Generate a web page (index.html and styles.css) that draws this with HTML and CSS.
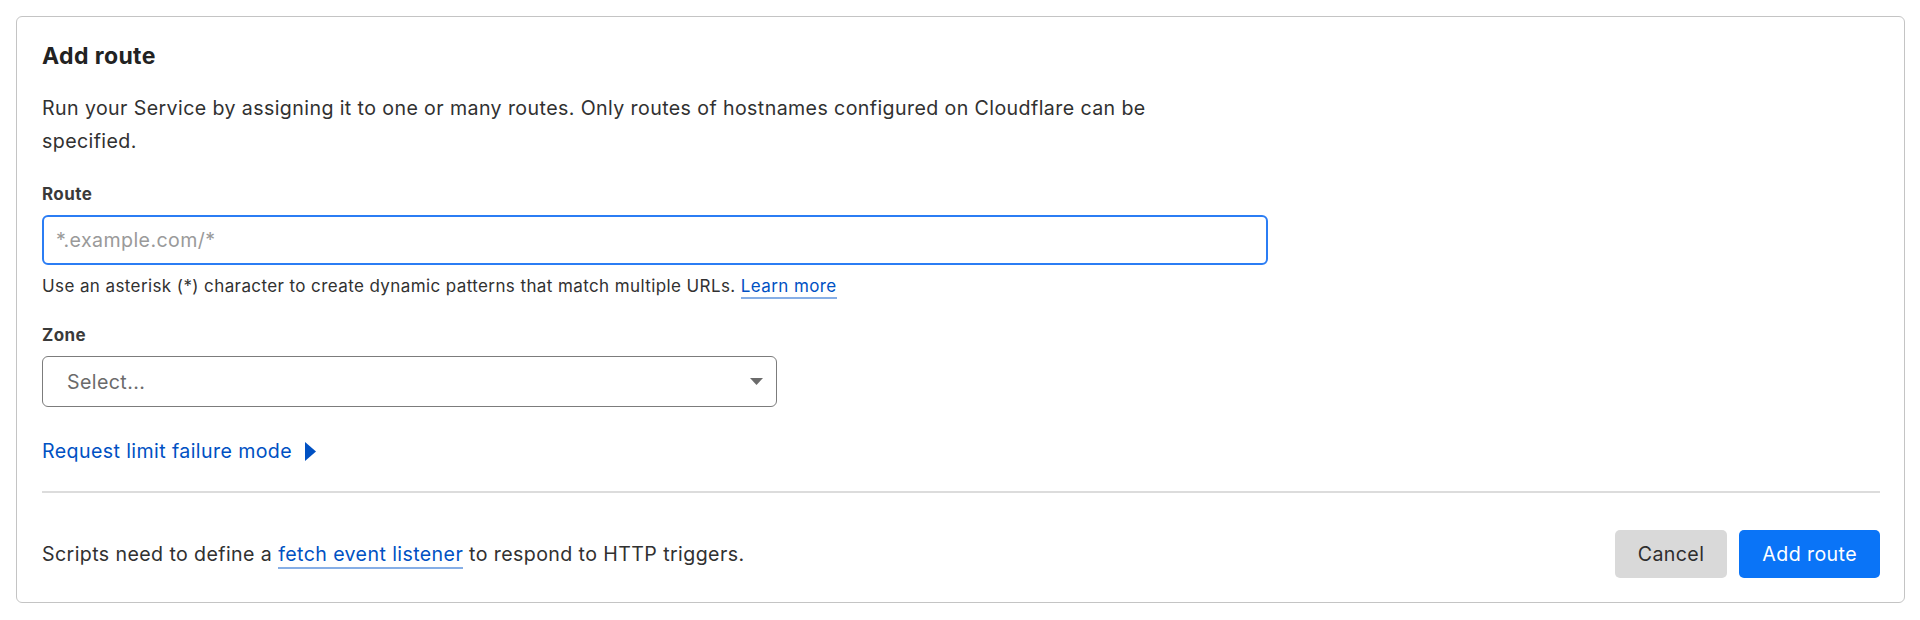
FILE: index.html
```html
<!DOCTYPE html>
<html lang="en">
<head>
<meta charset="utf-8">
<title>Add route</title>
<link rel="stylesheet" href="styles.css">
</head>
<body>
<section class="card">
  <h2 class="card-title">Add route</h2>
  <p class="desc">Run your Service by assigning it to one or many routes. Only routes of hostnames configured on Cloudflare can be specified.</p>

  <div class="field">
    <label class="label" for="route">Route</label>
    <div class="input input-focus">
      <span class="placeholder">*.example.com/*</span>
    </div>
    <p class="help">Use an asterisk (*) character to create dynamic patterns that match multiple URLs. <a class="link underline" href="#">Learn more</a></p>
  </div>

  <div class="field field-zone">
    <label class="label">Zone</label>
    <div class="select">
      <span class="select-value">Select...</span>
      <svg class="caret" width="13" height="7" viewBox="0 0 13 7"><path d="M0 0H13L6.5 7Z" fill="#6b6b6b"/></svg>
    </div>
  </div>

  <a class="toggle link" href="#">Request limit failure mode
    <svg class="toggle-icon" width="11" height="19" viewBox="0 0 11 19"><path d="M0 0L11 9.5L0 19Z" fill="#0051c3"/></svg>
  </a>

  <hr class="divider">

  <div class="footer">
    <p class="footer-text">Scripts need to define a <a class="link underline" href="#">fetch event listener</a> to respond to HTTP triggers.</p>
    <div class="actions">
      <button class="btn btn-secondary">Cancel</button>
      <button class="btn btn-primary">Add route</button>
    </div>
  </div>
</section>
</body>
</html>
```

FILE: styles.css
```css
* { box-sizing: border-box; }

html, body {
  margin: 0;
  background: #ffffff;
}

body {
  padding: 16px 15px 0 16px;
  font-family: Inter, "Noto Sans", "Liberation Sans", sans-serif;
  letter-spacing: 0.025em;
  color: #313131;
}

.card {
  border: 1px solid #c4c4c4;
  border-radius: 6px;
  padding: 24px 24px 24px 25px;
  display: flex;
  flex-direction: column;
}

.card-title {
  margin: 0;
  font-size: 23px;
  line-height: 30px;
  font-weight: 700;
  color: #222222;
}

.desc {
  margin: 21px 0 0;
  max-width: 1125px;
  font-size: 19.6px;
  line-height: 33px;
  color: #313131;
}

.field {
  margin-top: 25px;
  display: flex;
  flex-direction: column;
  align-items: flex-start;
}

.field-zone {
  margin-top: 26px;
}

.label {
  font-size: 17px;
  line-height: 22px;
  font-weight: 700;
  color: #3a3a3a;
  margin-bottom: 10px;
}

.input {
  width: 1226px;
  height: 50px;
  border: 2px solid #2b7df4;
  border-radius: 6px;
  padding: 0 12px;
  display: flex;
  align-items: center;
}

.placeholder {
  font-size: 19.6px;
  color: #9a9a9a;
}

.help {
  margin: 9px 0 0;
  font-size: 17px;
  line-height: 24px;
  color: #313131;
}

.link {
  color: #0051c3;
  text-decoration: none;
}

.underline {
  border-bottom: 2px solid #86aee6;
  padding-bottom: 1px;
}

.select {
  width: 735px;
  height: 51px;
  border: 1px solid #7c7c7c;
  border-radius: 6px;
  padding: 0 13px 0 24px;
  display: flex;
  align-items: center;
  justify-content: space-between;
}

.select-value {
  font-size: 19.6px;
  color: #6b6b6b;
}

.caret {
  display: block;
}

.toggle {
  margin-top: 32px;
  align-self: flex-start;
  display: flex;
  align-items: center;
  gap: 13px;
  font-size: 19.6px;
  line-height: 24px;
}

.toggle-icon {
  display: block;
}

.divider {
  margin: 28px 0 0;
  border: 0;
  border-top: 2px solid #dcdcdc;
  height: 0;
}

.footer {
  margin-top: 37px;
  display: flex;
  align-items: center;
  justify-content: space-between;
}

.footer-text {
  margin: 0;
  font-size: 19.6px;
  line-height: 26px;
  color: #313131;
}

.actions {
  display: flex;
  gap: 12px;
}

.btn {
  height: 48px;
  padding: 0 23px;
  border: 0;
  border-radius: 5px;
  font-family: inherit;
  letter-spacing: inherit;
  font-size: 19.6px;
}

.btn-secondary {
  background: #d9d9d9;
  color: #2e2e2e;
}

.btn-primary {
  background: #0a74f7;
  color: #ffffff;
}
```
